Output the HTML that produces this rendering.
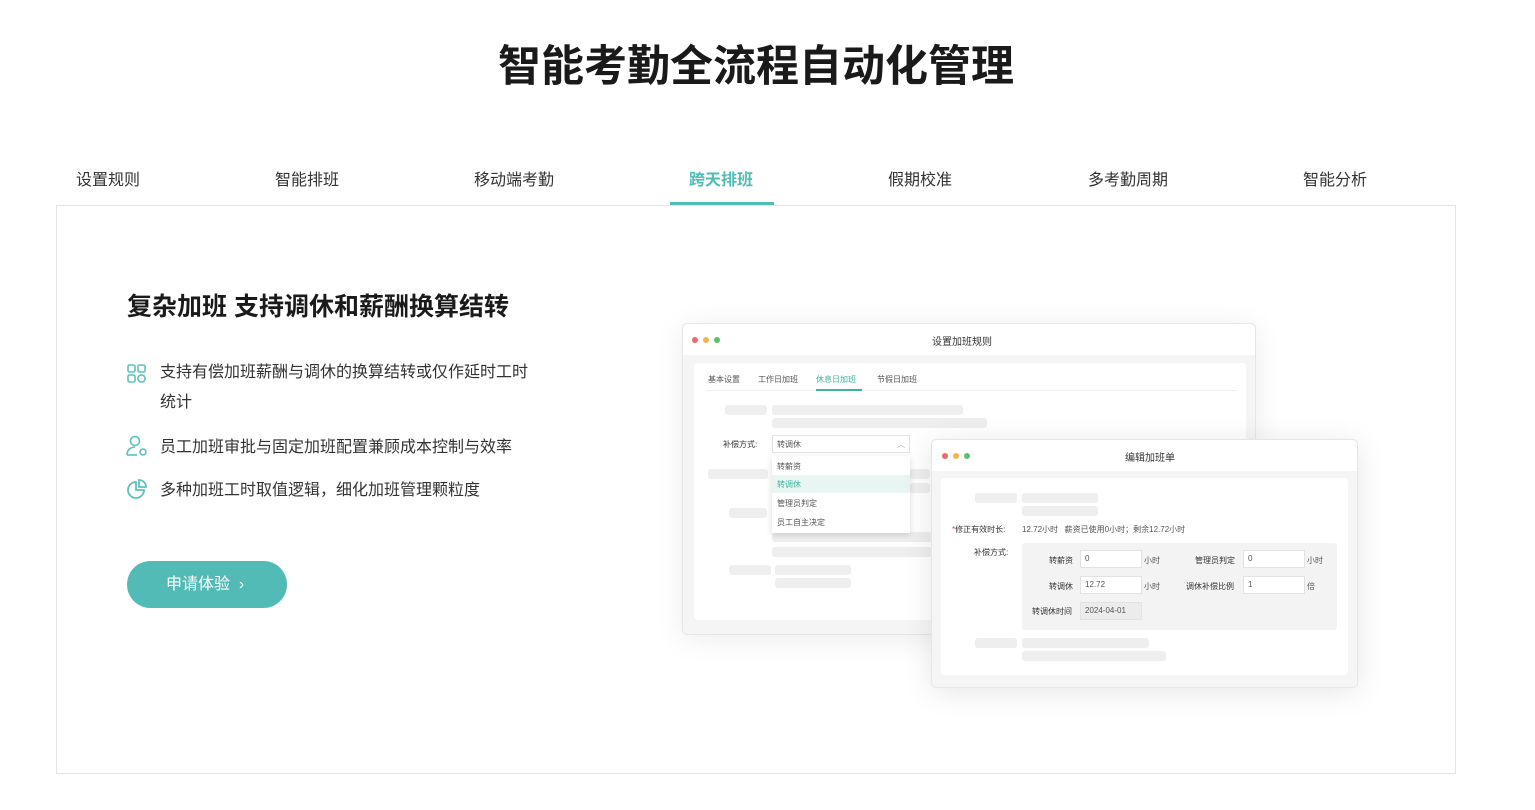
<!DOCTYPE html><html><head><meta charset="utf-8"><style>
*{margin:0;padding:0;box-sizing:border-box}
body{width:1535px;height:810px;background:#fff;font-family:"Liberation Sans","Noto Sans CJK SC",sans-serif;position:relative;overflow:hidden;color:#333}
.a{position:absolute}
.t{white-space:nowrap}
.g{position:absolute;background:#eeeeee;border-radius:3px}
.dot{position:absolute;width:6px;height:6px;border-radius:50%}
.s{font-size:8px;color:#555;position:absolute;white-space:nowrap}
.inp{position:absolute;background:#fff;border:1px solid #e2e2e2;height:18px;font-size:8px;color:#555;padding:3px 4px}
</style></head><body>
<div class="a t" style="left:0;width:1512px;top:32px;text-align:center;font-size:43px;font-weight:bold;color:#1a1a1a">智能考勤全流程自动化管理</div>
<div class="a t" style="left:76px;top:166px;font-size:16px">设置规则</div>
<div class="a t" style="left:275px;top:166px;font-size:16px">智能排班</div>
<div class="a t" style="left:474px;top:166px;font-size:16px">移动端考勤</div>
<div class="a t" style="left:689px;top:166px;font-size:16px;color:#4fbcb5;font-weight:bold">跨天排班</div>
<div class="a t" style="left:888px;top:166px;font-size:16px">假期校准</div>
<div class="a t" style="left:1088px;top:166px;font-size:16px">多考勤周期</div>
<div class="a t" style="left:1303px;top:166px;font-size:16px">智能分析</div>
<div class="a" style="left:56px;top:205px;width:1400px;height:569px;border:1px solid #e3e3e3"></div>
<div class="a" style="left:670px;top:202px;width:104px;height:3px;background:#4fbcb5"></div>
<div class="a t" style="left:127px;top:287px;font-size:25px;font-weight:bold;color:#1a1a1a">复杂加班 支持调休和薪酬换算结转</div>
<svg class="a" style="left:127px;top:364px" width="20" height="20" fill="none" stroke="#5ec1bb" stroke-width="1.6"><rect x="1" y="1" width="7" height="7" rx="1.5"/><rect x="11" y="1" width="7" height="7" rx="1.5"/><rect x="1" y="11" width="7" height="7" rx="1.5"/><circle cx="14.5" cy="14.5" r="3.6"/></svg>
<div class="a" style="left:160px;top:358px;font-size:16px;line-height:30px;width:380px">支持有偿加班薪酬与调休的换算结转或仅作延时工时统计</div>
<svg class="a" style="left:126px;top:435px" width="22" height="22" fill="none" stroke="#5ec1bb" stroke-width="1.6"><circle cx="9" cy="6" r="4.5"/><path d="M1 20c0-5 3.5-8 8-8"/><path d="M1 20h10"/><circle cx="17" cy="17" r="3"/></svg>
<div class="a t" style="left:160px;top:433px;font-size:16px">员工加班审批与固定加班配置兼顾成本控制与效率</div>
<svg class="a" style="left:127px;top:479px" width="20" height="20" fill="none" stroke="#5ec1bb" stroke-width="1.8"><path d="M9 3a8 8 0 1 0 8 8H9z"/><path d="M12 1v7h7a7 7 0 0 0-7-7z"/></svg>
<div class="a t" style="left:160px;top:476px;font-size:16px">多种加班工时取值逻辑，细化加班管理颗粒度</div>
<div class="a t" style="left:127px;top:561px;width:160px;height:47px;border-radius:24px;background:#52bbb6;color:#fff;font-size:16px;line-height:47px;padding-left:39px">申请体验 &nbsp;›</div>

<div class="a" style="left:682px;top:323px;width:574px;height:312px;background:#f5f5f5;border:1px solid #e6e6e6;border-radius:5px;box-shadow:0 4px 30px rgba(0,0,0,.08)"></div>
<div class="a" style="left:683px;top:324px;width:572px;height:31px;background:#fff;border-radius:5px 5px 0 0"></div>
<div class="dot" style="left:692px;top:337px;background:#ed6a6a"></div><div class="dot" style="left:703px;top:337px;background:#f0b54a"></div><div class="dot" style="left:714px;top:337px;background:#5cc06a"></div>
<div class="a t" style="left:932px;top:333px;font-size:10px;color:#333">设置加班规则</div>
<div class="a" style="left:694px;top:363px;width:552px;height:257px;background:#fff;border-radius:4px"></div>
<div class="s" style="left:708px;top:374px">基本设置</div><div class="s" style="left:758px;top:374px">工作日加班</div><div class="s" style="left:816px;top:374px;color:#3bb5a0">休息日加班</div><div class="s" style="left:877px;top:374px">节假日加班</div>
<div class="a" style="left:706px;top:390px;width:530px;height:1px;background:#eee"></div>
<div class="a" style="left:816px;top:389px;width:46px;height:2px;background:#3bb5a0"></div>
<div class="g" style="left:725px;top:405px;width:42px;height:10px"></div><div class="g" style="left:772px;top:405px;width:191px;height:10px"></div><div class="g" style="left:772px;top:418px;width:215px;height:10px"></div>
<div class="s" style="left:723px;top:439px;color:#333">补偿方式:</div>
<div class="inp" style="left:772px;top:435px;width:138px">转调休<span style="float:right;color:#aaa">︿</span></div>
<div class="g" style="left:708px;top:469px;width:60px;height:10px"></div><div class="g" style="left:729px;top:508px;width:38px;height:10px"></div>
<div class="g" style="left:910px;top:469px;width:20px;height:10px"></div><div class="g" style="left:910px;top:483px;width:20px;height:10px"></div>
<div class="g" style="left:772px;top:532px;width:160px;height:10px"></div><div class="g" style="left:772px;top:547px;width:160px;height:10px"></div>
<div class="g" style="left:729px;top:565px;width:42px;height:10px"></div><div class="g" style="left:775px;top:565px;width:76px;height:10px"></div><div class="g" style="left:775px;top:578px;width:76px;height:10px"></div>
<div class="a" style="left:772px;top:456px;width:138px;height:77px;background:#fff;box-shadow:0 2px 6px rgba(0,0,0,.15)"></div>
<div class="s" style="left:777px;top:461px">转薪资</div>
<div class="a" style="left:772px;top:475px;width:138px;height:18px;background:#e8f5f2"></div>
<div class="s" style="left:777px;top:479px;color:#3bb5a0">转调休</div>
<div class="s" style="left:777px;top:498px">管理员判定</div><div class="s" style="left:777px;top:517px">员工自主决定</div>

<div class="a" style="left:931px;top:439px;width:427px;height:249px;background:#f5f5f5;border:1px solid #e6e6e6;border-radius:5px;box-shadow:0 4px 30px rgba(0,0,0,.1)"></div>
<div class="a" style="left:932px;top:440px;width:425px;height:31px;background:#fff;border-radius:5px 5px 0 0"></div>
<div class="dot" style="left:942px;top:453px;background:#ed6a6a"></div><div class="dot" style="left:953px;top:453px;background:#f0b54a"></div><div class="dot" style="left:964px;top:453px;background:#5cc06a"></div>
<div class="a t" style="left:1125px;top:449px;font-size:10px;color:#333">编辑加班单</div>
<div class="a" style="left:941px;top:478px;width:407px;height:197px;background:#fff;border-radius:4px"></div>
<div class="g" style="left:975px;top:493px;width:42px;height:10px"></div><div class="g" style="left:1022px;top:493px;width:76px;height:10px"></div><div class="g" style="left:1022px;top:506px;width:76px;height:10px"></div>
<div class="s" style="left:952px;top:524px;color:#333"><span style="color:#e33">*</span>修正有效时长:</div>
<div class="s" style="left:1022px;top:524px">12.72小时 &nbsp; 薪资已使用0小时；剩余12.72小时</div>
<div class="s" style="left:974px;top:547px;color:#333">补偿方式:</div>
<div class="a" style="left:1022px;top:543px;width:315px;height:87px;background:#f3f3f3;border-radius:3px"></div>
<div class="s" style="left:1049px;top:555px;color:#333">转薪资</div><div class="inp" style="left:1080px;top:550px;width:62px">0</div><div class="s" style="left:1144px;top:555px">小时</div>
<div class="s" style="left:1195px;top:555px;color:#333">管理员判定</div><div class="inp" style="left:1243px;top:550px;width:62px">0</div><div class="s" style="left:1307px;top:555px">小时</div>
<div class="s" style="left:1049px;top:581px;color:#333">转调休</div><div class="inp" style="left:1080px;top:576px;width:62px">12.72</div><div class="s" style="left:1144px;top:581px">小时</div>
<div class="s" style="left:1186px;top:581px;color:#333">调休补偿比例</div><div class="inp" style="left:1243px;top:576px;width:62px">1</div><div class="s" style="left:1307px;top:581px">倍</div>
<div class="s" style="left:1032px;top:606px;color:#333">转调休时间</div><div class="inp" style="left:1080px;top:602px;width:62px;background:#ececec">2024-04-01</div>
<div class="g" style="left:975px;top:638px;width:42px;height:10px"></div><div class="g" style="left:1022px;top:638px;width:127px;height:10px"></div><div class="g" style="left:1022px;top:651px;width:144px;height:10px"></div>
</body></html>
